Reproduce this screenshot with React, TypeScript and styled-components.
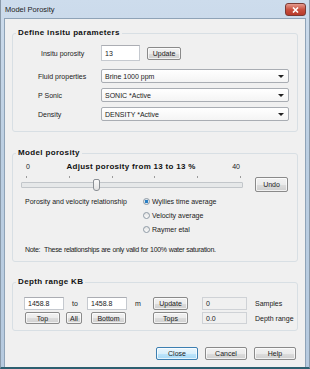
import styled, { createGlobalStyle } from 'styled-components';

const GlobalStyle = createGlobalStyle`
  html, body {
    margin: 0;
    padding: 0;
    background: #ffffff;
  }
  body {
    font-family: "Liberation Sans", Arial, sans-serif;
    font-size: 7px;
    color: #1a1a1a;
  }
`;

const Frame = styled.div`
  width: 310px;
  height: 369px;
  box-sizing: border-box;
  display: flex;
  flex-direction: column;
  padding: 0 3px 0 3px;
  background: linear-gradient(#cddcec, #bccfe2 40%, #b6cadf);
  border-bottom: 2px solid #2d5f70;
  border-left: 1px solid #8a9aaa;
  border-right: 1px solid #8a9aaa;
`;

const TitleBar = styled.div`
  height: 18px;
  flex-shrink: 0;
  display: flex;
  align-items: center;
  justify-content: space-between;
  padding: 0 0 0 1px;
`;

const Title = styled.span`
  font-size: 7.5px;
  color: #1e1e1e;
`;

const CloseBox = styled.div`
  width: 19px;
  height: 11px;
  margin-top: 1px;
  border: 1px solid #7a3a34;
  border-radius: 3px;
  background: linear-gradient(#e59a8f, #c9503f 50%, #b83a2a);
  display: flex;
  align-items: center;
  justify-content: center;
`;

const Client = styled.div`
  flex: 1;
  display: flex;
  flex-direction: column;
  background: #f0f0f0;
  border: 1px solid #8fa3b7;
  border-bottom: none;
  padding: 9px 7px 0 7px;
`;

const Group = styled.fieldset<{ $top?: number }>`
  margin: ${(p) => p.$top ?? 0}px 0 0 0;
  padding: 0;
  border: 1px solid #d8dfe4;
  border-radius: 3px;
  min-width: 0;
`;

const Legend = styled.legend`
  font-size: 8px;
  font-weight: bold;
  letter-spacing: 0.35px;
  color: #111;
  padding: 0 2px;
  margin-left: 3px;
  line-height: 10px;
`;

const ParamList = styled.div`
  display: flex;
  flex-direction: column;
  gap: 5px;
  padding: 7px 8px 10px 25px;
`;

const ParamRow = styled.div<{ $extra?: number }>`
  display: flex;
  align-items: center;
  margin-bottom: ${(p) => p.$extra ?? 0}px;
`;

const ParamLabel = styled.span<{ $indent?: number }>`
  width: ${(p) => 63 - (p.$indent ?? 0)}px;
  padding-left: ${(p) => p.$indent ?? 0}px;
  flex-shrink: 0;
`;

const TextBox = styled.div<{ $w: number; $h?: number }>`
  width: ${(p) => p.$w}px;
  height: ${(p) => p.$h ?? 13}px;
  box-sizing: border-box;
  background: #ffffff;
  border: 1px solid #c5c9cf;
  border-top-color: #abadb3;
  display: flex;
  align-items: center;
  padding-left: 3px;
`;

const ReadBox = styled(TextBox)`
  background: #f0f0f0;
  border-color: #cfd2d6;
`;

const Button = styled.div<{ $w: number; $h?: number; $default?: boolean }>`
  width: ${(p) => p.$w}px;
  height: ${(p) => p.$h ?? 13}px;
  box-sizing: border-box;
  border: 1px solid ${(p) => (p.$default ? '#3c7fb1' : '#8a8a8a')};
  border-radius: 2px;
  background: ${(p) =>
    p.$default
      ? 'linear-gradient(#eaf6fd, #d9f0fc 50%, #bee6fd 51%, #a7d9f5)'
      : 'linear-gradient(#f2f2f2, #ebebeb 50%, #dddddd 51%, #cfcfcf)'};
  box-shadow: inset 0 0 0 1px rgba(255, 255, 255, 0.7);
  display: flex;
  align-items: center;
  justify-content: center;
  flex-shrink: 0;
`;

const Select = styled.div`
  width: 188px;
  height: 14px;
  box-sizing: border-box;
  border: 1px solid #a9adb3;
  border-radius: 2px;
  background: linear-gradient(#ffffff, #f4f4f4);
  display: flex;
  align-items: center;
  justify-content: space-between;
  padding: 0 4px 0 3px;
`;

const Arrow = styled.span`
  width: 0;
  height: 0;
  border-left: 3px solid transparent;
  border-right: 3px solid transparent;
  border-top: 3px solid #222;
`;

const PorosityBody = styled.div`
  display: flex;
  flex-direction: column;
  padding: 3px 9px 8px 8px;
`;

const Scale = styled.div`
  width: 222px;
  display: flex;
  justify-content: space-between;
  align-items: center;
  padding: 0 3px 0 5px;
  box-sizing: border-box;
  height: 10px;
`;

const ScaleHeading = styled.span`
  font-size: 8px;
  font-weight: bold;
  letter-spacing: 0.3px;
  color: #111;
`;

const SliderRow = styled.div`
  display: flex;
  align-items: flex-end;
  justify-content: space-between;
  margin-top: 5px;
`;

const Slider = styled.div`
  position: relative;
  width: 222px;
  height: 17px;
  margin-bottom: -1px;
`;

const Ticks = styled.div`
  display: flex;
  justify-content: space-between;
  padding: 0 2px 0 5px;
  height: 3px;
`;

const Tick = styled.span`
  width: 1px;
  height: 2px;
  background: #9a9a9a;
`;

const Track = styled.div`
  margin-top: 3px;
  height: 6px;
  box-sizing: border-box;
  background: #e6e8e9;
  border: 1px solid #c2c6ca;
  border-radius: 1px;
`;

const Thumb = styled.div`
  position: absolute;
  top: 3px;
  width: 7px;
  height: 12px;
  box-sizing: border-box;
  border: 1px solid #8a8f94;
  border-radius: 2px 2px 3px 3px;
  background: linear-gradient(#fafafa, #e2e2e2);
`;

const Relationship = styled.div`
  display: flex;
  margin-top: 4px;
  padding-left: 4px;
`;

const RelLabel = styled.span`
  width: 118px;
  flex-shrink: 0;
  line-height: 11px;
`;

const RadioList = styled.div`
  display: flex;
  flex-direction: column;
  gap: 3px;
`;

const RadioItem = styled.div`
  display: flex;
  align-items: center;
  gap: 2px;
  height: 11px;
`;

const RadioDot = styled.span<{ $on?: boolean }>`
  width: 7px;
  height: 7px;
  box-sizing: border-box;
  border-radius: 50%;
  border: 1px solid #8e9aa5;
  background: ${(p) =>
    p.$on
      ? 'radial-gradient(circle, #2a7fc4 0 1.6px, #dde6ee 2px)'
      : 'linear-gradient(#e4e4e4, #fafafa)'};
`;

const Note = styled.div`
  margin-top: 11px;
  padding-left: 4px;
  letter-spacing: -0.3px;
  word-spacing: 0.3px;
`;

const DepthGrid = styled.div`
  display: grid;
  grid-template-columns: 103px 26px 49px 49px 1fr;
  row-gap: 2px;
  align-items: center;
  padding: 10px 0 6px 11px;
`;

const Pair = styled.div`
  display: flex;
  align-items: center;
`;

const Word = styled.span<{ $w: number; $pad?: number }>`
  width: ${(p) => p.$w}px;
  padding-left: ${(p) => p.$pad ?? 0}px;
  box-sizing: border-box;
`;

const Spacer = styled.span<{ $w: number }>`
  width: ${(p) => p.$w}px;
  flex-shrink: 0;
`;

const Footer = styled.div`
  margin-top: auto;
  display: flex;
  justify-content: flex-end;
  gap: 7px;
  padding: 0 2px 7px 0;
`;

const fluidRows = [
  { label: 'Fluid properties', value: 'Brine 1000 ppm' },
  { label: 'P Sonic', value: 'SONIC *Active' },
  { label: 'Density', value: 'DENSITY *Active' },
];

const radios = ['Wyllies time average', 'Velocity average', 'Raymer etal'];

const min = 0;
const max = 40;
const porosity = 13;

export default function App() {
  const thumbLeft = 5 + ((porosity - min) / (max - min)) * 214 - 3;

  return (
    <>
      <GlobalStyle />
      <Frame>
        <TitleBar>
          <Title>Model Porosity</Title>
          <CloseBox>
            <svg width="7" height="6" viewBox="0 0 7 6">
              <path d="M1 0.5 L6 5.5 M6 0.5 L1 5.5" stroke="#fff" strokeWidth="1.6" />
            </svg>
          </CloseBox>
        </TitleBar>
        <Client>
          <Group>
            <Legend>Define insitu parameters</Legend>
            <ParamList>
              <ParamRow $extra={3}>
                <ParamLabel $indent={3}>Insitu porosity</ParamLabel>
                <TextBox $w={39} $h={16}>13</TextBox>
                <Spacer $w={7} />
                <Button $w={34}>Update</Button>
              </ParamRow>
              {fluidRows.map((r) => (
                <ParamRow key={r.label}>
                  <ParamLabel>{r.label}</ParamLabel>
                  <Select>
                    <span>{r.value}</span>
                    <Arrow />
                  </Select>
                </ParamRow>
              ))}
            </ParamList>
          </Group>

          <Group $top={16}>
            <Legend>Model porosity</Legend>
            <PorosityBody>
              <Scale>
                <span>0</span>
                <ScaleHeading>Adjust porosity from 13 to 13 %</ScaleHeading>
                <span>40</span>
              </Scale>
              <SliderRow>
                <Slider>
                  <Ticks>
                    {[0, 1, 2, 3, 4, 5].map((i) => (
                      <Tick key={i} />
                    ))}
                  </Ticks>
                  <Track />
                  <Thumb style={{ left: thumbLeft }} />
                </Slider>
                <Button $w={33} $h={15}>Undo</Button>
              </SliderRow>
              <Relationship>
                <RelLabel>Porosity and velocity relationship</RelLabel>
                <RadioList>
                  {radios.map((r, i) => (
                    <RadioItem key={r}>
                      <RadioDot $on={i === 0} />
                      <span>{r}</span>
                    </RadioItem>
                  ))}
                </RadioList>
              </Relationship>
              <Note>Note:&nbsp; These relationships are only valid for 100% water saturation.</Note>
            </PorosityBody>
          </Group>

          <Group $top={15}>
            <Legend>Depth range KB</Legend>
            <DepthGrid>
              <Pair>
                <TextBox $w={40}>1458.8</TextBox>
                <Word $w={23} $pad={8}>to</Word>
                <TextBox $w={40}>1458.8</TextBox>
              </Pair>
              <Word $w={26} $pad={8}>m</Word>
              <Button $w={35}>Update</Button>
              <ReadBox $w={45}>0</ReadBox>
              <Word $w={50} $pad={4}>Samples</Word>

              <Pair>
                <Spacer $w={1} />
                <Button $w={35} $h={12}>Top</Button>
                <Spacer $w={6} />
                <Button $w={16} $h={12}>All</Button>
                <Spacer $w={9} />
                <Button $w={35} $h={12}>Bottom</Button>
              </Pair>
              <span />
              <Button $w={35} $h={12}>Tops</Button>
              <ReadBox $w={45} $h={12}>0.0</ReadBox>
              <Word $w={50} $pad={4}>Depth range</Word>
            </DepthGrid>
          </Group>

          <Footer>
            <Button $w={42} $default>Close</Button>
            <Button $w={42}>Cancel</Button>
            <Button $w={42}>Help</Button>
          </Footer>
        </Client>
      </Frame>
    </>
  );
}
